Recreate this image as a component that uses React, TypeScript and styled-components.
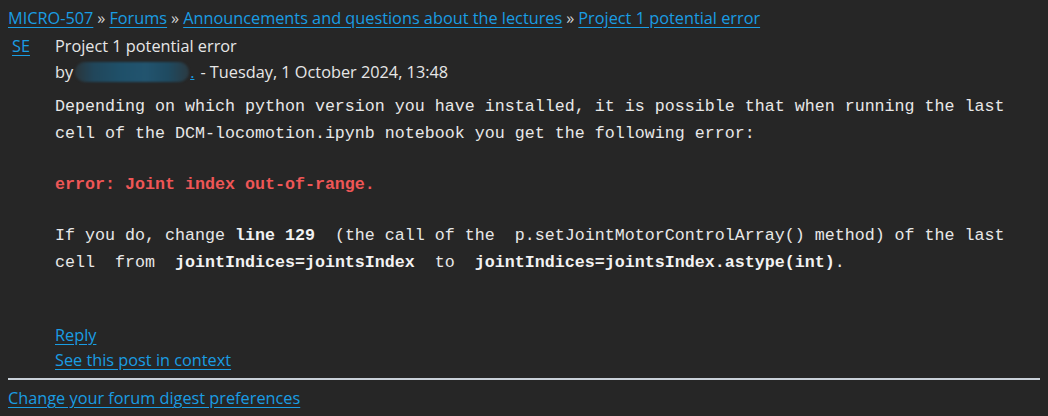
import React from 'react'
import styled, { createGlobalStyle } from 'styled-components'

const GlobalStyle = createGlobalStyle`
  html, body {
    margin: 0;
    background: #262626;
  }
  body {
    padding: 8px;
    font-family: "Open Sans", "Noto Sans", sans-serif;
    font-size: 16.3px;
    color: #e2e2e2;
  }
`;

const Link = styled.a`
  color: #1a9de3;
  text-decoration: underline;
  text-underline-offset: 3px;
`;

const Crumbs = styled.div`
  line-height: 20px;
  height: 21px;
  color: #d0d0d0;
`;

const Sep = styled.span`
  margin: 0 4px;
`;

const Post = styled.div`
  display: grid;
  grid-template-columns: 47px 1fr;
  margin-top: 6px;
`;

const Picture = styled.div`
  padding-left: 4px;
  line-height: 22px;
`;

const Header = styled.div`
  display: flex;
  flex-direction: column;
`;

const Subject = styled.div`
  color: #e6e6e6;
  line-height: 22px;
`;

const Author = styled.div`
  display: flex;
  align-items: center;
  height: 30px;
  color: #e6e6e6;
`;

const Blurred = styled.span`
  display: inline-block;
  width: 114px;
  height: 20px;
  margin: 0 1px 0 2px;
  border-radius: 10px;
  background: linear-gradient(90deg, #2a353b 0%, #21465a 16%, #1f5069 40%, #22546f 62%, #1f4a60 82%, #2b3a42 100%);
  filter: blur(1.2px);
`;

const Dot = styled.span`
  color: #1a9de3;
  text-decoration: underline;
  margin-right: 6px;
`;

const Message = styled.div`
  font-family: "Liberation Mono", "Courier New", monospace;
  font-size: 16.667px;
  line-height: 27px;
  color: #e8e8e8;
  margin-top: 6px;
  white-space: pre;
`;

const Para = styled.p<{ $gap?: number }>`
  margin: 0 0 ${({ $gap }) => $gap ?? 24}px 0;
`;

const ErrorText = styled.b`
  color: #ee5656;
`;

const Strong = styled.b`
  color: #f2f2f2;
`;

const Commands = styled.div`
  display: flex;
  flex-direction: column;
  margin-top: 47px;
  line-height: 25px;
`;

const Rule = styled.hr`
  border: none;
  height: 2px;
  background: #c9d1d9;
  margin: 5px 0 5px 0;
`;

const Footer = styled.div`
  line-height: 26px;
`;

export default function App() {
  return (
    <>
      <GlobalStyle />
      <Crumbs>
        <Link href="#">MICRO-507</Link>
        <Sep>»</Sep>
        <Link href="#">Forums</Link>
        <Sep>»</Sep>
        <Link href="#">Announcements and questions about the lectures</Link>
        <Sep>»</Sep>
        <Link href="#">Project 1 potential error</Link>
      </Crumbs>
      <Post>
        <Picture>
          <Link href="#">SE</Link>
        </Picture>
        <div>
          <Header>
            <Subject>Project 1 potential error</Subject>
            <Author>
              by<Blurred /><Dot>.</Dot>- Tuesday, 1 October 2024, 13:48
            </Author>
          </Header>
          <Message>
            <Para>
              Depending on which python version you have installed, it is possible that when running the last
              {'\n'}cell of the DCM-locomotion.ipynb notebook you get the following error:
            </Para>
            <Para>
              <ErrorText>error: Joint index out-of-range.</ErrorText>
            </Para>
            <Para $gap={0}>
              If you do, change <Strong>line 129</Strong>  (the call of the  p.setJointMotorControlArray() method) of the last
              {'\n'}cell  from  <Strong>jointIndices=jointsIndex</Strong>  to  <Strong>jointIndices=jointsIndex.astype(int)</Strong>.
            </Para>
          </Message>
          <Commands>
            <div><Link href="#">Reply</Link></div>
            <div><Link href="#">See this post in context</Link></div>
          </Commands>
        </div>
      </Post>
      <Rule />
      <Footer>
        <Link href="#">Change your forum digest preferences</Link>
      </Footer>
    </>
  )
}
